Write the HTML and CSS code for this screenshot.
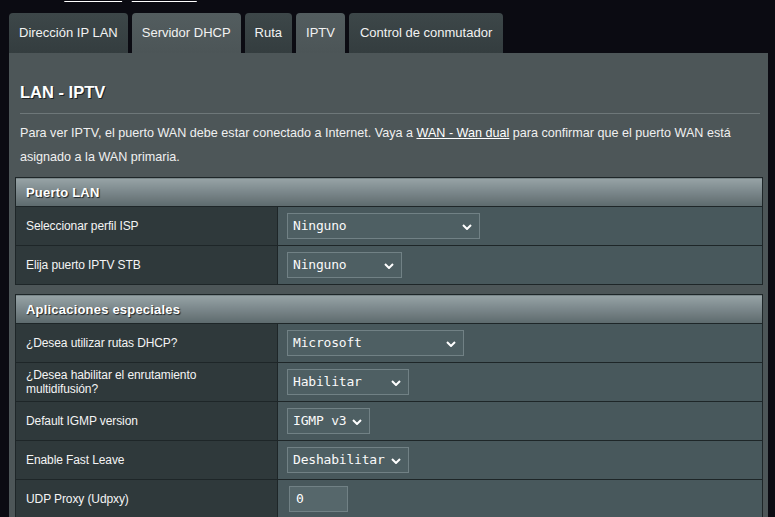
FILE: index.html
```html
<!DOCTYPE html>
<html lang="es">
<head>
<meta charset="utf-8">
<title>LAN - IPTV</title>
<link rel="stylesheet" href="styles.css">
</head>
<body>
<div class="ssid">SSID: <a href="#">RK99_5G</a> <a href="#">RK99_5G1</a></div>
<nav class="tabs">
  <div class="tab">Dirección IP LAN</div>
  <div class="tab active">Servidor DHCP</div>
  <div class="tab">Ruta</div>
  <div class="tab active">IPTV</div>
  <div class="tab">Control de conmutador</div>
</nav>
<main class="panel">
  <h1 class="title">LAN - IPTV</h1>
  <hr class="rule">
  <p class="desc">Para ver IPTV, el puerto WAN debe estar conectado a Internet. Vaya a <a href="#">WAN - Wan dual</a> para confirmar que el puerto WAN está asignado a la WAN primaria.</p>

  <table class="form">
    <thead><tr><th colspan="2">Puerto LAN</th></tr></thead>
    <tbody>
      <tr><td class="lbl">Seleccionar perfil ISP</td><td class="val"><div class="sel w193">Ninguno<svg class="chev" viewBox="0 0 10 6"><path d="M1 1 L5 5 L9 1"/></svg></div></td></tr>
      <tr><td class="lbl">Elija puerto IPTV STB</td><td class="val"><div class="sel w115">Ninguno<svg class="chev" viewBox="0 0 10 6"><path d="M1 1 L5 5 L9 1"/></svg></div></td></tr>
    </tbody>
  </table>

  <table class="form">
    <thead><tr><th colspan="2">Aplicaciones especiales</th></tr></thead>
    <tbody>
      <tr><td class="lbl">¿Desea utilizar rutas DHCP?</td><td class="val"><div class="sel w177">Microsoft<svg class="chev" viewBox="0 0 10 6"><path d="M1 1 L5 5 L9 1"/></svg></div></td></tr>
      <tr><td class="lbl">¿Desea habilitar el enrutamiento multidifusión?</td><td class="val"><div class="sel w122">Habilitar<svg class="chev" viewBox="0 0 10 6"><path d="M1 1 L5 5 L9 1"/></svg></div></td></tr>
      <tr><td class="lbl">Default IGMP version</td><td class="val"><div class="sel w83">IGMP v3<svg class="chev" viewBox="0 0 10 6"><path d="M1 1 L5 5 L9 1"/></svg></div></td></tr>
      <tr><td class="lbl">Enable Fast Leave</td><td class="val"><div class="sel w122">Deshabilitar<svg class="chev" viewBox="0 0 10 6"><path d="M1 1 L5 5 L9 1"/></svg></div></td></tr>
      <tr><td class="lbl">UDP Proxy (Udpxy)</td><td class="val"><div class="inp">0</div></td></tr>
    </tbody>
  </table>
</main>
</body>
</html>
```
FILE: styles.css
```css
html, body {
  margin: 0;
  padding: 0;
  background: #0b0b12;
  overflow: hidden;
}
body {
  font-family: "Liberation Sans", Arial, sans-serif;
  color: #fff;
  width: 775px;
  height: 517px;
}
.ssid {
  margin-top: -11px;
  padding-left: 20px;
  height: 24px;
  font-size: 13px;
  font-weight: bold;
  line-height: 14px;
  color: #fff;
  word-spacing: 6px;
}
.ssid a { color: #fff; }
.tabs {
  display: flex;
  gap: 3px;
  padding-left: 9px;
}
.tab {
  height: 40px;
  line-height: 39px;
  padding: 0 10px;
  font-size: 13px;
  color: #f2f2f2;
  border-radius: 4px 4px 0 0;
  background: linear-gradient(#3d4749, #343d3f);
  margin-right: 1px;
}
.tab.active {
  background: linear-gradient(#535d5f, #4c5557);
}
.tab:last-child { padding: 0 11px; }
.panel {
  margin-left: 9px;
  width: 759px;
  background: #4d5658;
  padding: 29px 5px 20px 6px;
  box-sizing: border-box;
  height: 470px;
}
.title {
  margin: 0 0 0 5px;
  font-size: 16.5px;
  line-height: 20px;
  font-weight: bold;
  text-shadow: 1px 1px 0 #1c2224;
}
.rule {
  margin: 11px 3px 0 5px;
  border: 0;
  height: 1px;
  background: #6e7779;
}
.desc {
  margin: 7px 0 8px 5px;
  font-size: 12.6px;
  line-height: 24px;
  color: #f0f0f0;
}
.desc a { color: #fff; }
.form {
  width: 748px;
  border-collapse: collapse;
  margin-bottom: 9px;
  border: 1px solid #1e2628;
}
.form th {
  text-align: left;
  height: 28px;
  padding: 0 0 0 10px;
  font-size: 13px;
  font-weight: bold;
  letter-spacing: 0.2px;
  background: linear-gradient(#97a3a6, #5d6a6d);
  text-shadow: 1px 1px 1px #1c2326;
  border-bottom: 1px solid #1e2628;
}
.form td {
  height: 38px;
  padding: 0;
  border-top: 1px solid #1e2628;
}
.lbl {
  width: 241px;
  padding-left: 10px !important;
  padding-right: 10px !important;
  background: #2f393b;
  font-size: 12px;
  line-height: 14px;
  letter-spacing: -0.1px;
  color: #f4f4f4;
  border-right: 1px solid #1e2628;
}
.val {
  background: #48585c;
  padding-left: 9px !important;
}
.sel {
  position: relative;
  box-sizing: border-box;
  height: 26px;
  line-height: 24px;
  border: 1px solid #718185;
  background: #4e5f63;
  font-family: "DejaVu Sans Mono", "Liberation Mono", monospace;
  font-size: 13px;
  letter-spacing: -0.2px;
  color: #fafafa;
  padding-left: 5px;
}
.w193 { width: 193px; }
.w115 { width: 115px; }
.w177 { width: 177px; }
.w122 { width: 122px; }
.w83 { width: 83px; }
.chev {
  position: absolute;
  right: 7px;
  top: 10px;
  width: 10px;
  height: 6px;
  fill: none;
  stroke: #fff;
  stroke-width: 2;
}
.inp {
  box-sizing: border-box;
  width: 59px;
  height: 26px;
  line-height: 24px;
  margin-left: 2px;
  border: 1px solid #718185;
  background: #56676b;
  font-family: "DejaVu Sans Mono", "Liberation Mono", monospace;
  font-size: 13px;
  padding-left: 6px;
}
```
